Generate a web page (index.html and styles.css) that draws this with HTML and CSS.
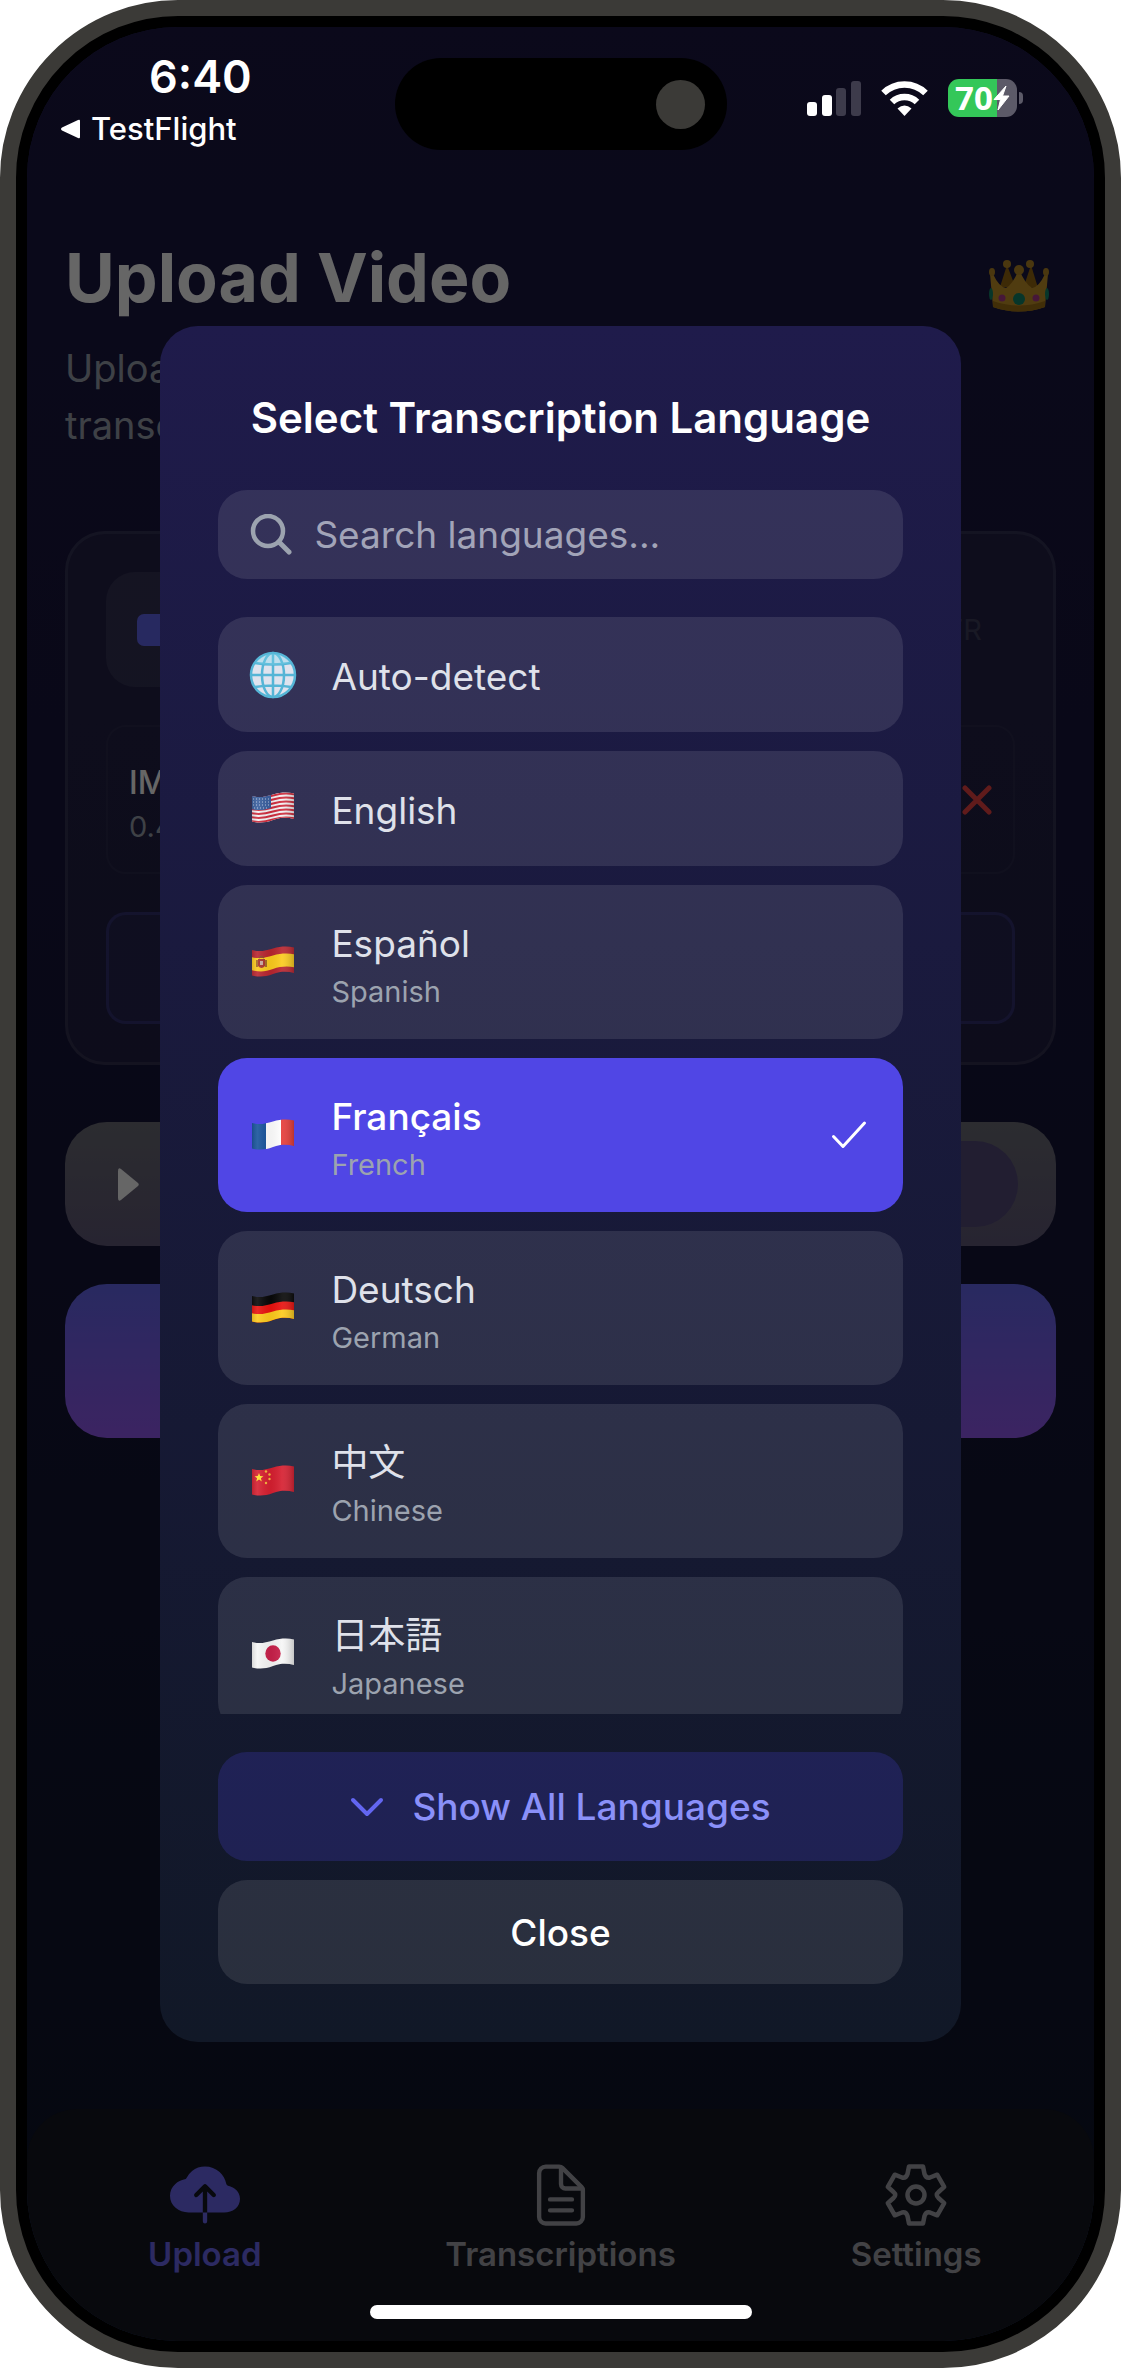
FILE: index.html
```html
<!DOCTYPE html>
<html lang="en">
<head>
	<meta charset="UTF-8">
	<meta name="viewport" content="width=device-width, initial-scale=1">
	<title>Upload Video</title>
	<link rel="stylesheet" href="styles.css">
</head>
<body>
<!-- shared wave shape and shading of the flags -->
<svg class="defs" width="0" height="0" aria-hidden="true">
	<defs>
		<clipPath id="wave"><path d="M1 4C8 6 14 5 22 2.500S37 0 43 1.500V27C37 25.500 30 25 22 28S8 31 1 29.500z"/></clipPath>
		<linearGradient id="shade">
			<stop offset="0" stop-color="#000" stop-opacity=".15"/>
			<stop offset=".15" stop-color="#fff" stop-opacity=".1"/>
			<stop offset=".45" stop-color="#000" stop-opacity=".05"/>
			<stop offset=".7" stop-color="#fff" stop-opacity=".08"/>
			<stop offset="1" stop-color="#000" stop-opacity=".22"/>
		</linearGradient>
	</defs>
</svg>
<div class="phone">
	<div class="screen">
		<div class="status">
			<div class="status-left">
				<span class="time">6:40</span>
				<a class="back" href="#"><svg width="20" height="20" viewBox="0 0 20 20"><path d="M19 2v16q0 2-2 1L1 11.500q-2-1.500 0-3L17 1q2-1 2 1z" fill="#fff"/></svg>TestFlight</a>
			</div>
			<div class="island"><span class="camera"></span></div>
			<div class="status-right">
				<svg width="54" height="35" viewBox="0 0 54 35" fill="#fff">
					<rect x="0" y="21" width="10" height="14" rx="3"/>
					<rect x="15" y="14" width="10" height="21" rx="3"/>
					<rect x="29" y="7" width="10" height="28" rx="3" fill="#3d3b4b"/>
					<rect x="44" y="0" width="10" height="35" rx="3" fill="#3d3b4b"/>
				</svg>
				<svg width="47" height="35" viewBox="0 0 47 35">
					<path d="M2.500 12a30 30 0 0 1 42 0M11 21a18 18 0 0 1 25 0" fill="none" stroke="#fff" stroke-width="6.500"/>
					<path d="M23.500 35l-7-7.500q7-6 14 0z" fill="#fff"/>
				</svg>
				<div class="battery">
					<span class="level">70</span>
					<svg width="17" height="26" viewBox="0 0 17 26"><path d="M13 1L1 14.500h6.500L5 25 16 11H9.500z" fill="#fff" stroke="#fff" stroke-linejoin="round"/></svg>
				</div>
			</div>
		</div>

		<div class="main">
			<div class="header">
				<h1>Upload Video</h1>
				<svg class="crown" width="60" height="52" viewBox="0 0 60 52">
					<path d="M11 27L18 5 26 26 35 26 42 5 49 28z" fill="#9a6a10"/>
					<path d="M4 47L1 14q1-2 3 0Q10 27 17 28 24 24 30 9q6 15 13 19 7-1 13-14 2-2 3 0l-3 33q-26 9-52 0z" fill="#c8962a"/>
					<path d="M4 41q26 9 52 0v6q-26 9-52 0z" fill="#a27314"/>
					<g fill="#b98a26"><circle cx="18" cy="4" r="4"/><circle cx="41" cy="4" r="4"/><circle cx="30" cy="10" r="5"/><ellipse cx="3" cy="12" rx="3" ry="4"/><ellipse cx="57" cy="12" rx="3" ry="4"/></g>
					<g fill="#12876a"><ellipse cx="30" cy="39" rx="6" ry="6"/><ellipse cx="2" cy="34" rx="2" ry="6"/><ellipse cx="58" cy="34" rx="2" ry="6"/></g>
					<g fill="#b03a8c"><circle cx="13" cy="38" r="3.500"/><circle cx="47" cy="38" r="3.500"/></g>
				</svg>
			</div>
			<p class="intro">Upload your video or audio file to<br>transcribe</p>

			<div class="panel">
				<div class="source">
					<button class="source-tab active" type="button" aria-label="Video">
						<svg width="48" height="32" viewBox="0 0 48 32" fill="#6366f1"><rect width="33" height="32" rx="7"/><path d="M35 12l13-8v24l-13-8z"/></svg>
					</button>
					<button class="source-tab" type="button">FR</button>
				</div>
				<div class="file">
					<div class="file-text">
						<div class="file-name">IMG_0412</div>
						<div class="file-size">0.4 MB</div>
					</div>
					<button class="remove" type="button" aria-label="Remove">
						<svg width="30" height="30" viewBox="0 0 30 30"><path d="M3 3l24 24M27 3L3 27" stroke="#ef4444" stroke-width="5" stroke-linecap="round"/></svg>
					</button>
				</div>
				<button class="change" type="button" aria-label="Change file"></button>
			</div>

			<div class="preview">
				<svg width="22" height="33" viewBox="0 0 22 33"><path d="M1 3q0-4 3-2l17 14q1.500 1.500 0 3L4 32q-3 2-3-2z" fill="#fff"/></svg>
				<span class="preview-pill"></span>
			</div>
			<button class="start" type="button" aria-label="Start"></button>
		</div>

		<div class="tabbar">
			<a class="tab current" href="#">
				<svg width="70" height="70" viewBox="0 0 512 512" fill="currentColor"><path d="M473.660 210c-14-10.380-31.200-18-49.360-22.110a16.110 16.110 0 0 1-12.190-12.220c-7.800-34.750-24.590-64.550-49.270-87.130C334.150 62.250 296.210 47.790 256 47.790c-35.350 0-68 11.080-94.370 32.050a150.070 150.070 0 0 0-42.060 53 16 16 0 0 1-11.310 8.870c-26.750 5.400-50.900 16.870-69.340 33.120C13.460 197.330 0 227.240 0 261.390c0 34.520 14.490 66 40.790 88.760 25.120 21.690 58.940 33.640 95.210 33.640h104V230.420l-36.690 36.690a16 16 0 0 1-23.160-.56c-5.800-6.370-5.240-16.300.85-22.390l63.690-63.680a16 16 0 0 1 22.620 0L331 244.140c6.280 6.290 6.640 16.600.39 22.910a16 16 0 0 1-22.680.06L272 230.420v153.370h124c31.340 0 59.910-8.800 80.450-24.770 23.260-18.100 35.550-44 35.550-74.830 0-29.940-13.260-55.610-38.340-74.190zM240 448.210a16 16 0 1 0 32 0v-64.420h-32z"/></svg>
				<span>Upload</span>
			</a>
			<a class="tab" href="#">
				<svg width="70" height="70" viewBox="0 0 512 512" fill="none" stroke="currentColor" stroke-width="32" stroke-linecap="round" stroke-linejoin="round"><path d="M416 221.250V416a48 48 0 0 1-48 48H144a48 48 0 0 1-48-48V96a48 48 0 0 1 48-48h98.750a32 32 0 0 1 22.620 9.370l141.260 141.260a32 32 0 0 1 9.370 22.620z"/><path d="M256 56v120a32 32 0 0 0 32 32h120M176 288h160M176 368h160"/></svg>
				<span>Transcriptions</span>
			</a>
			<a class="tab" href="#">
				<svg width="70" height="70" viewBox="-35 -35 70 70" fill="none" stroke="currentColor" stroke-width="4.500" stroke-linejoin="round"><path d="M-8.500-21L-7-28.500H7L8.500-21Q10-16.500 14-17.500L21.200-20.300 28.200-8.200 22.500-3Q19 0 22.500 3L28.200 8.200 21.200 20.300 14 17.500Q10 16.500 8.500 21L7 28.500H-7L-8.500 21Q-10 16.500-14 17.500L-21.200 20.300-28.200 8.200-22.500 3Q-19 0-22.500-3L-28.200-8.200-21.200-20.300-14-17.500Q-10-16.500-8.500-21z"/><circle r="8.500"/></svg>
				<span>Settings</span>
			</a>
		</div>
		<div class="home"></div>

		<div class="overlay">
			<div class="modal" role="dialog" aria-labelledby="modal_title">
				<h2 id="modal_title">Select Transcription Language</h2>
				<label class="search">
					<svg width="42" height="42" viewBox="0 0 42 42" fill="none" stroke="#9ca3af" stroke-linecap="round"><circle cx="18" cy="17" r="15" stroke-width="4.500"/><path d="M29 28l10 10" stroke-width="5"/></svg>
					<input type="text" placeholder="Search languages..." aria-label="Search languages">
				</label>
				<ul class="langs">
					<li><button class="lang" type="button">
						<svg class="flag" width="48" height="48" viewBox="0 0 48 48"><circle cx="24" cy="24" r="22.500" fill="#dfe3ee"/><g fill="none" stroke="#55b5d6" stroke-width="2.500"><circle cx="24" cy="24" r="22"/><ellipse cx="24" cy="24" rx="11" ry="22"/><path d="M24 2v44M2 24h44M6 12q18 3 36 0M6 36q18-3 36 0"/></g><path d="M6 12A22 22 0 0 1 42 12Q24 16 6 12z" fill="#7fd4ec" opacity=".35"/></svg>
						<span class="lang-text"><span class="name">Auto-detect</span></span>
					</button></li>
					<li><button class="lang" type="button">
						<svg class="flag" width="48" height="33" viewBox="-2 0 48 33"><g clip-path="url(#wave)"><path d="M0 0h44v32H0z" fill="#f3f0f2"/><g fill="none" stroke="#cf2b3c" stroke-width="2"><path id="stripe" d="M0 5c8 2 14 1 22-1.500s16-2.500 22-1"/><use href="#stripe" y="4"/><use href="#stripe" y="8"/><use href="#stripe" y="12"/><use href="#stripe" y="16"/><use href="#stripe" y="20"/><use href="#stripe" y="24"/></g><path d="M0 3c8 2 14 1 20-1v14c-6 2-12 3-20 1z" fill="#3a5f9e"/><path d="M2 7h17M2 10h17M2 13h17M3 16h14" stroke="#b9c8e2" stroke-width="1" stroke-dasharray="1 2"/><path d="M0 0h44v32H0z" fill="url(#shade)"/></g></svg>
						<span class="lang-text"><span class="name">English</span></span>
					</button></li>
					<li><button class="lang" type="button">
						<svg class="flag" width="48" height="33" viewBox="-2 0 48 33"><g clip-path="url(#wave)"><path d="M0 0h44v32H0z" fill="#b8252f"/><path d="M0 11c8 2 14 1 22-1.500s16-2.500 22-1v13c-6-1.500-14-1.500-22 1.500s-14 3-22 1z" fill="#fbcb1d"/><path d="M7 13h7v7q-3.500 4-7 0z" fill="#a8342d"/><path d="M8 12q2.500-3 5 0M6 14v7M15 14v7" fill="none" stroke="#8a4b25" stroke-width="1.500"/><path d="M9 15h3v4H9z" fill="#c9a9a0"/><path d="M0 0h44v32H0z" fill="url(#shade)"/></g></svg>
						<span class="lang-text"><span class="name">Español</span><span class="sub">Spanish</span></span>
					</button></li>
					<li><button class="lang selected" type="button">
						<svg class="flag" width="48" height="33" viewBox="-2 0 48 33"><g clip-path="url(#wave)"><path d="M0 0h15v32H0z" fill="#17539b"/><path d="M15 0h15v32H15z" fill="#fff"/><path d="M30 0h14v32H30z" fill="#e63b38"/><path d="M0 0h44v32H0z" fill="url(#shade)"/></g></svg>
						<span class="lang-text"><span class="name">Français</span><span class="sub">French</span></span>
						<svg class="check" width="36" height="30" viewBox="0 0 36 30"><path d="M2.500 16.500L12 26.500 33.500 3" fill="none" stroke="#fff" stroke-width="3" stroke-linecap="round" stroke-linejoin="round"/></svg>
					</button></li>
					<li><button class="lang" type="button">
						<svg class="flag" width="48" height="33" viewBox="-2 0 48 33"><g clip-path="url(#wave)"><path d="M0 0h44v32H0z" fill="#080808"/><path d="M0 13c8 2 14 1 22-1.500s16-2.500 22-1V32H0z" fill="#e8120f"/><path d="M0 21c8 2 14 1 22-1.500s16-2.500 22-1V32H0z" fill="#fcca1c"/><path d="M0 0h44v32H0z" fill="url(#shade)"/></g></svg>
						<span class="lang-text"><span class="name">Deutsch</span><span class="sub">German</span></span>
					</button></li>
					<li><button class="lang" type="button">
						<svg class="flag" width="48" height="33" viewBox="-2 0 48 33"><g clip-path="url(#wave)"><path d="M0 0h44v32H0z" fill="#d61f30"/><path d="M8 8l1.200 3 3.200.2-2.500 2 .9 3.200L8 14.600l-2.800 1.800.9-3.200-2.500-2 3.200-.2z" fill="#ffde2e"/><g fill="#f6b53c"><circle cx="15" cy="6.500" r="1.200"/><circle cx="18.500" cy="9.500" r="1.200"/><circle cx="18.500" cy="14" r="1.200"/><circle cx="15" cy="18" r="1.200"/></g><path d="M0 0h44v32H0z" fill="url(#shade)"/></g></svg>
						<span class="lang-text"><span class="name" lang="zh">中文</span><span class="sub">Chinese</span></span>
					</button></li>
					<li><button class="lang" type="button">
						<svg class="flag" width="48" height="33" viewBox="-2 0 48 33"><g clip-path="url(#wave)"><path d="M0 0h44v32H0z" fill="#f6f6f6"/><ellipse cx="22" cy="15.500" rx="7.700" ry="8.200" fill="#c8204a"/><path d="M0 0h44v32H0z" fill="url(#shade)"/></g></svg>
						<span class="lang-text"><span class="name" lang="ja">日本語</span><span class="sub">Japanese</span></span>
					</button></li>
				</ul>
				<button class="show-all" type="button">
					<svg width="34" height="20" viewBox="0 0 34 20"><path d="M3 3l14 14L31 3" fill="none" stroke="#6366f1" stroke-width="4" stroke-linecap="round" stroke-linejoin="round"/></svg>
					Show All Languages
				</button>
				<button class="close" type="button">Close</button>
			</div>
		</div>
	</div>
</div>
</body>
</html>
```
FILE: styles.css
```css
*{
	margin: 0;
	padding: 0;
	box-sizing: border-box;
}
body{
	background-color: #fff;
	color: #fff;
	font-family: Inter, "Noto Sans CJK JP", sans-serif;
}
ul{list-style: none}
a{
	color: inherit;
	text-decoration: none;
}
button,input{
	border: 0;
	background: none;
	color: inherit;
	font: inherit;
}
button{cursor: pointer}
svg{
	display: block;
	flex: none;
}
.defs{position: absolute}

/* phone body */
.phone{
	display: flex;
	min-height: 100vh;
	margin-right: 1px;
	padding: 11px;
	border: 16px solid #3b3a37;
	border-radius: 178px;
	background-color: #000;
}
.screen{
	position: relative;
	flex: 1;
	display: flex;
	flex-direction: column;
	border-radius: 151px;
	overflow: hidden;
	background: linear-gradient(#1c1844, #16153a 45%, #111630 75%, #0d1529);
}

/* status bar, stays above the dimmed page */
.status{
	position: relative;
	z-index: 3;
	display: grid;
	grid-template-columns: 1fr 332px 1fr;
	align-items: start;
}
.status-left{padding: 22px 0 0 34px}
.time{
	display: block;
	padding-left: 88px;
	font-size: 45px;
	line-height: 56px;
	font-weight: 600;
}
.back{
	display: flex;
	align-items: center;
	gap: 10px;
	font-size: 31px;
	line-height: 48px;
	font-weight: 500;
}
.island{
	display: flex;
	align-items: center;
	justify-content: flex-end;
	height: 92px;
	margin-top: 31px;
	padding-right: 22px;
	border-radius: 46px;
	background-color: #000;
}
.camera{
	width: 49px;
	height: 49px;
	border-radius: 50%;
	background-color: #3b3a37;
}
.status-right{
	display: flex;
	align-items: center;
	justify-content: flex-end;
	gap: 20px;
	padding: 52px 77px 0 0;
}
.battery{
	position: relative;
	display: flex;
	align-items: center;
	justify-content: center;
	width: 69px;
	height: 38px;
	border-radius: 11px;
	background: linear-gradient(90deg, #34c759 71%, #5c5a68 71%);
}
.battery:after{
	content: "";
	position: absolute;
	right: -6px;
	top: 13px;
	width: 4px;
	height: 12px;
	border-radius: 0 4px 4px 0;
	background-color: #5c5a68;
}
.level{
	font-family: "Noto Sans", sans-serif;
	font-size: 33px;
	line-height: 38px;
	font-weight: 700;
}

/* page */
.main{padding: 82px 38px 0}
.header{
	display: flex;
	align-items: center;
	justify-content: space-between;
}
.header h1{
	font-size: 68px;
	line-height: 84px;
	font-weight: 700;
}
.crown{
	margin-top: 17px;
	margin-right: 7px;
}
.intro{
	margin-top: 21px;
	color: #9ca3af;
	font-size: 38px;
	line-height: 57px;
}
.panel{
	margin-top: 77px;
	padding: 38px;
	border: 3px solid rgba(255,255,255,.08);
	border-radius: 40px;
	background-color: rgba(255,255,255,.05);
}
.source{
	display: flex;
}
.source-tab{
	flex: 1;
	display: flex;
	align-items: center;
	justify-content: flex-end;
	height: 115px;
	padding: 0 33px;
	border-radius: 29px;
	color: #3f3f5c;
	font-size: 29px;
}
.source-tab.active{
	justify-content: flex-start;
	padding: 0 31px;
	background-color: rgba(255,255,255,.08);
}
.file{
	display: flex;
	align-items: center;
	justify-content: space-between;
	height: 149px;
	margin: 38px 0;
	padding: 0 21px;
	border: 2px solid rgba(255,255,255,.04);
	border-radius: 20px;
}
.file-text{padding-top: 10px}
.file-name{
	font-size: 32px;
	line-height: 44px;
	font-weight: 500;
}
.file-size{
	color: #9ca3af;
	font-size: 29px;
	line-height: 44px;
}
.change{
	display: block;
	width: 100%;
	height: 112px;
	border: 3px solid rgba(99,102,241,.2);
	border-radius: 20px;
	background-color: rgba(99,102,241,.08);
}
.preview{
	display: flex;
	align-items: center;
	justify-content: space-between;
	height: 124px;
	margin-top: 57px;
	padding: 0 38px 0 52px;
	border-radius: 42px;
	background: linear-gradient(#6e6f78, #625a7a);
}
.preview-pill{
	width: 120px;
	height: 86px;
	border-radius: 43px;
	background-color: #554b7c;
}
.start{
	display: block;
	width: 100%;
	height: 154px;
	margin-top: 38px;
	border-radius: 42px;
	background: linear-gradient(#6568f1, #965af4);
}

/* bottom tabs */
.tabbar{
	display: flex;
	height: 232px;
	margin-top: auto;
	padding-top: 51px;
	border-radius: 50px 50px 0 0;
	background-color: #141721;
}
.tab{
	flex: 1;
	display: flex;
	flex-direction: column;
	align-items: center;
	color: #a5a5ac;
	font-size: 33px;
	line-height: 48px;
	font-weight: 600;
}
.tab.current{color: #6e69f4}
.home{
	position: absolute;
	z-index: 3;
	left: 50%;
	bottom: 22px;
	width: 382px;
	height: 14px;
	margin-left: -191px;
	border-radius: 7px;
	background-color: #fff;
}

/* language dialog */
.overlay{
	position: absolute;
	z-index: 2;
	top: 0;
	right: 0;
	bottom: 0;
	left: 0;
	display: flex;
	align-items: center;
	justify-content: center;
	background-color: rgba(0,0,0,.6);
}
.modal{
	display: flex;
	flex-direction: column;
	width: 75%;
	padding: 58px;
	border-radius: 38px;
	background: linear-gradient(#1f1b4b, #111827);
}
.modal h2{
	margin-bottom: 38px;
	font-size: 42px;
	line-height: 68px;
	font-weight: 600;
	text-align: center;
}
.search{
	display: flex;
	align-items: center;
	gap: 22px;
	height: 89px;
	padding: 0 32px;
	border-radius: 29px;
	background-color: rgba(255,255,255,.1);
}
.search input{
	flex: 1;
	min-width: 0;
	outline: 0;
	font-size: 37px;
}
.search input::placeholder{
	color: #a2a4b8;
	opacity: 1;
}
.langs{
	display: flex;
	flex-direction: column;
	gap: 19px;
	max-height: 1097px;
	margin: 38px 0;
	overflow: hidden;
}
.lang{
	display: flex;
	align-items: center;
	width: 100%;
	min-height: 115px;
	padding: 30px 36px 30px 31px;
	border-radius: 29px;
	background-color: rgba(255,255,255,.1);
	text-align: left;
}
.lang.selected{background-color: #5046e5}
.flag{margin-right: 34px}
.lang-text{
	flex: 1;
	padding: 6px 0 2px;
}
.name,.sub{display: block}
.name{
	color: #dfe1ea;
	font-size: 37px;
	line-height: 46px;
}
.selected .name{
	color: #fff;
	font-weight: 500;
}
.sub{
	margin-top: 10px;
	color: #9ca3af;
	font-size: 29px;
	line-height: 30px;
}
.show-all,.close{
	border-radius: 29px;
	font-size: 37px;
	font-weight: 500;
}
.show-all{
	display: flex;
	align-items: center;
	justify-content: center;
	gap: 28px;
	height: 109px;
	margin-bottom: 19px;
	background-color: rgba(79,70,229,.22);
	color: #8a90f9;
}
.close{
	height: 104px;
	background-color: rgba(255,255,255,.1);
}
```
